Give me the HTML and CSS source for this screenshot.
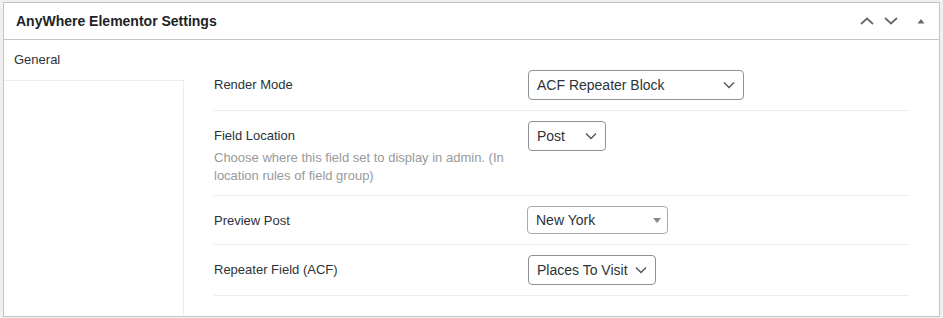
FILE: index.html
```html
<!DOCTYPE html>
<html lang="en">
<head>
    <meta charset="UTF-8">
    <meta name="viewport" content="width=device-width, initial-scale=1.0">
    <title>AnyWhere Elementor Settings</title>
    <link rel="stylesheet" href="styles.css">
</head>
<body>
    <div class="postbox">
        <div class="postbox-header">
            <h2 class="hndle">AnyWhere Elementor Settings</h2>
            <div class="handle-actions">
                <button type="button" class="handle-btn" aria-label="Move up">
                    <svg width="16" height="10" viewBox="0 0 16 10"><polyline points="2,8 8,2.5 14,8" fill="none" stroke="#646970" stroke-width="1.8"/></svg>
                </button>
                <button type="button" class="handle-btn" aria-label="Move down">
                    <svg width="16" height="10" viewBox="0 0 16 10"><polyline points="2,2 8,7.5 14,2" fill="none" stroke="#646970" stroke-width="1.8"/></svg>
                </button>
                <button type="button" class="handle-btn toggle" aria-label="Toggle panel">
                    <svg width="10" height="8" viewBox="0 0 10 8"><polygon points="1.5,6.5 5,2 8.5,6.5" fill="#646970"/></svg>
                </button>
            </div>
        </div>

        <div class="inside">
            <aside class="tabs">
                <a href="#" class="tab active">General</a>
                <div class="tabs-fill"></div>
            </aside>

            <div class="fields">
                <div class="field">
                    <div class="field-label">
                        <label for="renderMode">Render Mode</label>
                    </div>
                    <div class="field-input">
                        <span class="select-wrap w-render">
                            <select id="renderMode" name="renderMode">
                                <option>ACF Repeater Block</option>
                            </select>
                            <svg class="chevron" width="12" height="8" viewBox="0 0 12 8"><polyline points="1,1.5 6,6.5 11,1.5" fill="none" stroke="#50575e" stroke-width="1.4"/></svg>
                        </span>
                    </div>
                </div>

                <div class="field">
                    <div class="field-label">
                        <label for="fieldLocation">Field Location</label>
                        <p class="description">Choose where this field set to display in admin. (In location rules of field group)</p>
                    </div>
                    <div class="field-input">
                        <span class="select-wrap w-post">
                            <select id="fieldLocation" name="fieldLocation">
                                <option>Post</option>
                            </select>
                            <svg class="chevron" width="12" height="8" viewBox="0 0 12 8"><polyline points="1,1.5 6,6.5 11,1.5" fill="none" stroke="#50575e" stroke-width="1.4"/></svg>
                        </span>
                    </div>
                </div>

                <div class="field">
                    <div class="field-label">
                        <label>Preview Post</label>
                    </div>
                    <div class="field-input">
                        <span class="select2">
                            <span class="select2-text">New York</span>
                            <span class="select2-arrow"></span>
                        </span>
                    </div>
                </div>

                <div class="field">
                    <div class="field-label">
                        <label for="repeaterField">Repeater Field (ACF)</label>
                    </div>
                    <div class="field-input">
                        <span class="select-wrap w-places">
                            <select id="repeaterField" name="repeaterField">
                                <option>Places To Visit</option>
                            </select>
                            <svg class="chevron" width="12" height="8" viewBox="0 0 12 8"><polyline points="1,1.5 6,6.5 11,1.5" fill="none" stroke="#50575e" stroke-width="1.4"/></svg>
                        </span>
                    </div>
                </div>
            </div>
        </div>
    </div>
</body>
</html>
```

FILE: styles.css
```css
body { margin: 0; padding: 2px 3px 1px; background: #f0f0f1; font-family: "Liberation Sans", Arial, sans-serif; font-size: 13px; color: #2c3338; }

.postbox { background: #fff; border: 1px solid #c3c4c7; }
.postbox-header { display: flex; align-items: center; justify-content: space-between; height: 36px; border-bottom: 1px solid #c3c4c7; }
.hndle { margin: 0; padding-left: 12px; font-size: 14px; font-weight: 700; color: #1d2327; }
.handle-actions { display: flex; height: 100%; }
.handle-btn { display: flex; align-items: center; justify-content: center; width: 24px; height: 100%; padding: 0; border: 0; background: none; cursor: pointer; }
.handle-btn.toggle { width: 36px; }

.inside { display: flex; }
.tabs { display: flex; flex-direction: column; width: 180px; flex-shrink: 0; }
.tab { display: block; height: 40px; line-height: 40px; padding-left: 10px; color: #2c3338; text-decoration: none; background: #fff; }
.tabs-fill { flex: 1; border-top: 1px solid #ececec; border-right: 1px solid #ececec; }

.fields { flex: 1; padding: 20px 30px; }
.field { display: flex; padding: 10px 0; border-bottom: 1px solid #ececec; }
.field-label { width: 314px; flex-shrink: 0; padding-top: 6px; }
.field-label label { display: block; line-height: 18px; }
.description { margin: 4px 0 0; line-height: 18px; color: #999; }
.field-input { flex: 1; }

.select-wrap { position: relative; display: inline-block; }
.select-wrap select { appearance: none; -webkit-appearance: none; width: 100%; height: 30px; padding: 0 24px 0 8px; border: 1px solid #8c8f94; border-radius: 4px; background: #fff; font-family: inherit; font-size: 14px; color: #2c3338; }
.select-wrap .chevron { position: absolute; right: 9px; top: 11px; pointer-events: none; }
.w-render { width: 216px; }
.w-post { width: 78px; }
.w-places { width: 128px; }

.select2 { display: flex; align-items: center; justify-content: space-between; box-sizing: border-box; width: 141px; height: 28px; margin-left: -1px; padding: 0 6px 0 8px; border: 1px solid #aaa; border-radius: 4px; font-size: 14px; color: #2c3338; }
.select2-arrow { width: 0; height: 0; border-style: solid; border-width: 5px 4px 0; border-color: #888 transparent transparent; }
```
